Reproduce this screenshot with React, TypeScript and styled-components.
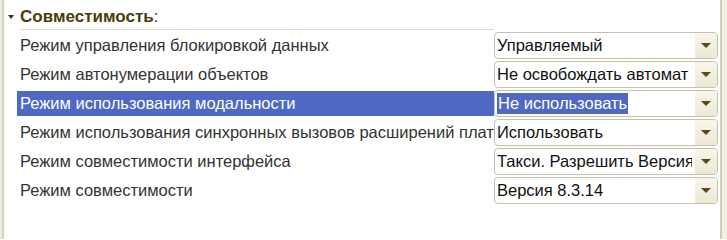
import styled, { createGlobalStyle } from "styled-components";

// #region Style

const GlobalStyle = createGlobalStyle`
  html, body {
    margin: 0;
    padding: 0;
    background: #ffffff;
  }
  body {
    font-family: "Liberation Sans", Arial, sans-serif;
  }
`;

const Page = styled.div`
  display: flex;
  height: 239px;
  overflow: hidden;
  background: #ffffff;
`;

const LeftEdge = styled.div`
  width: 2px;
  background: #efede3;
  border-right: 2px solid #d6d3c4;
`;

const RightEdge = styled.div`
  width: 5px;
  background: #f1efe4;
  border-left: 2px solid #cfccbb;
`;

const Content = styled.div`
  flex: 1;
  display: flex;
  flex-direction: column;
  padding: 0 2px 0 13px;
`;

const GroupHeader = styled.div`
  display: grid;
  grid-template-columns: 12px 1fr 224px;
  margin-left: -9px;
  height: 30px;
`;

const Caret = styled.span`
  display: flex;
  align-items: center;
  padding-top: 4px;

  &::before {
    content: "";
    border-left: 3px solid transparent;
    border-right: 3px solid transparent;
    border-top: 4px solid #3c3216;
  }
`;

const GroupTitle = styled.div`
  display: flex;
  align-items: center;
  padding-top: 4px;
  border-bottom: 1px solid #dddbcf;
  font-size: 17px;
  font-weight: bold;
  color: #4a3b0c;

  span {
    font-weight: normal;
  }
`;

const Row = styled.div`
  display: grid;
  grid-template-columns: 1fr 224px;
  align-items: end;
  height: 29px;
`;

const Label = styled.div<{ $active?: boolean }>`
  height: 25px;
  margin-bottom: 1px;
  padding-left: 3px;
  display: flex;
  align-items: center;
  white-space: nowrap;
  overflow: hidden;
  font-size: 16.5px;
  color: ${(p) => (p.$active ? "#ffffff" : "#333333")};
  background: ${(p) => (p.$active ? "#4e69c4" : "transparent")};
`;

const Field = styled.div`
  display: flex;
  height: 27px;
  box-sizing: border-box;
  border: 1px solid #c6c2aa;
  border-radius: 4px;
  background: #ffffff;
  overflow: hidden;
`;

const FieldText = styled.div`
  flex: 1;
  display: flex;
  align-items: center;
  padding-left: 2px;
  margin-right: 3px;
  white-space: nowrap;
  overflow: hidden;
  font-size: 16.5px;
  color: #111111;
`;

const Selection = styled.span`
  padding: 1px 1px;
  background: #4e69c4;
  color: #ffffff;
`;

const DropButton = styled.div`
  width: 22px;
  display: flex;
  align-items: center;
  justify-content: center;
  background: linear-gradient(#f8f6ec, #ece8d3);

  &::before {
    content: "";
    border-left: 5px solid transparent;
    border-right: 5px solid transparent;
    border-top: 5px solid #5a4915;
  }
`;

// #endregion

interface ISetting {
  label: string;
  value: string;
  active?: boolean;
}

const settings: ISetting[] = [
  { label: "Режим управления блокировкой данных", value: "Управляемый" },
  { label: "Режим автонумерации объектов", value: "Не освобождать автомат" },
  { label: "Режим использования модальности", value: "Не использовать", active: true },
  {
    label: "Режим использования синхронных вызовов расширений платформы и внешних компонент",
    value: "Использовать",
  },
  { label: "Режим совместимости интерфейса", value: "Такси. Разрешить Версия" },
  { label: "Режим совместимости", value: "Версия 8.3.14" },
];

export default function App() {
  return (
    <>
      <GlobalStyle />
      <Page>
        <LeftEdge />
        <Content>
          <GroupHeader>
            <Caret />
            <GroupTitle>
              Совместимость<span>:</span>
            </GroupTitle>
          </GroupHeader>
          {settings.map((s) => (
            <Row key={s.label}>
              <Label $active={s.active}>{s.label}</Label>
              <Field>
                <FieldText>
                  {s.active ? <Selection>{s.value}</Selection> : s.value}
                </FieldText>
                <DropButton />
              </Field>
            </Row>
          ))}
        </Content>
        <RightEdge />
      </Page>
    </>
  );
}
